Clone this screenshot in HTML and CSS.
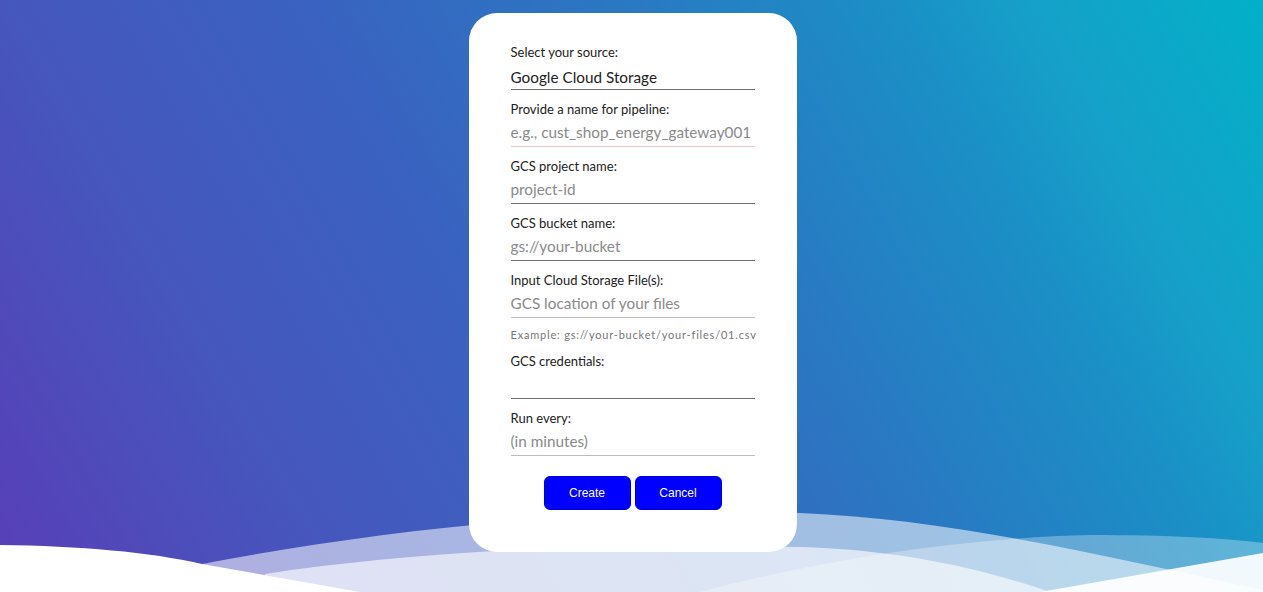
FILE: index.html
```html
<!DOCTYPE html>
<html lang="en">
<head>
<meta charset="utf-8">
<title>Create pipeline</title>
<link rel="stylesheet" href="styles.css">
</head>
<body>
<svg class="waves" viewBox="0 492 1263 100" preserveAspectRatio="none" aria-hidden="true">
  <path d="M202,564 C400,526 620,506 800,513 C950,519 1100,555 1263,590 V592 H202 Z" fill="#fff" fill-opacity="0.55"/>
  <path d="M700,592 C820,560 960,538 1090,535 C1170,535 1225,538 1263,543 V592 Z" fill="#fff" fill-opacity="0.3"/>
  <path d="M265,574 C420,550 620,542 800,547 C900,550 980,568 1050,592 H265 Z" fill="#fff" fill-opacity="0.62"/>
  <path d="M0,545 C80,546 150,552 202,564 L360,592 H0 Z" fill="#fff"/>
  <path d="M1040,592 L1263,553 V592 Z" fill="#fff" fill-opacity="0.92"/>
</svg>
<main class="page">
  <form class="card">
    <div class="field">
      <label class="label">Select your source:</label>
      <select class="input select"><option>Google Cloud Storage</option></select>
    </div>
    <div class="field">
      <label class="label">Provide a name for pipeline:</label>
      <input class="input input-warn" type="text" placeholder="e.g., cust_shop_energy_gateway001" autofocus>
    </div>
    <div class="field">
      <label class="label">GCS project name:</label>
      <input class="input" type="text" placeholder="project-id">
    </div>
    <div class="field">
      <label class="label">GCS bucket name:</label>
      <input class="input" type="text" placeholder="gs://your-bucket">
    </div>
    <div class="field field-help">
      <label class="label">Input Cloud Storage File(s):</label>
      <input class="input input-light" type="text" placeholder="GCS location of your files">
      <p class="help">Example: gs://your-bucket/your-files/01.csv</p>
    </div>
    <div class="field">
      <label class="label">GCS credentials:</label>
      <input class="input" type="text">
    </div>
    <div class="field">
      <label class="label">Run every:</label>
      <input class="input input-light" type="text" placeholder="(in minutes)">
    </div>
    <div class="actions">
      <button type="button" class="btn">Create</button>
      <button type="button" class="btn">Cancel</button>
    </div>
  </form>
</main>
</body>
</html>
```
FILE: styles.css
```css
html, body {
  margin: 0;
  height: 100%;
}
body {
  position: relative;
  overflow: hidden;
  font-family: "Lato", "Noto Sans", sans-serif;
  background: linear-gradient(60deg, #5740b8 2%, #4656bd 21%, #3a62c0 40%, #2a78c2 60%, #1a90c6 77%, #16a0c9 85%, #02b0c8 100%);
}
.waves {
  position: absolute;
  left: 0;
  bottom: 0;
  width: 100%;
  height: 100px;
  display: block;
}
.page {
  position: relative;
  display: flex;
  justify-content: center;
  padding: 13px 0 0 2px;
}
.card {
  width: 244px;
  height: 466px;
  padding: 31px 42px 42px;
  background: #fff;
  border-radius: 28px;
  display: flex;
  flex-direction: column;
}
.field {
  display: flex;
  flex-direction: column;
  margin-bottom: 11px;
}
.label {
  font-size: 13px;
  line-height: 17px;
  color: #222;
}
.input {
  box-sizing: border-box;
  width: 244px;
  height: 29px;
  margin: 0;
  padding: 0 0 1px;
  border: 0;
  border-bottom: 1px solid #707070;
  border-radius: 0;
  background: transparent;
  font-family: inherit;
  font-size: 15.3px;
  color: #222;
  outline: none;
  caret-color: #000;
}
.input::placeholder {
  color: #8a8a8a;
}
.select {
  appearance: none;
  -webkit-appearance: none;
  padding: 3px 0 0;
}
.input-warn {
  border-bottom-color: #f1c6bd;
}
.input-light {
  border-bottom-color: #bdbdbd;
}
.help {
  margin: 10px 0 0;
  font-size: 11px;
  line-height: 14px;
  letter-spacing: 0.8px;
  white-space: nowrap;
  color: #777;
}
.actions {
  margin-top: 9px;
  display: flex;
  justify-content: center;
  gap: 4px;
}
.btn {
  width: 87px;
  height: 34px;
  border: 1px solid #0000d8;
  border-radius: 6px;
  background: #0000ff;
  color: #fff;
  font-family: "Liberation Sans", Arial, sans-serif;
  font-size: 12px;
  cursor: pointer;
}
```
